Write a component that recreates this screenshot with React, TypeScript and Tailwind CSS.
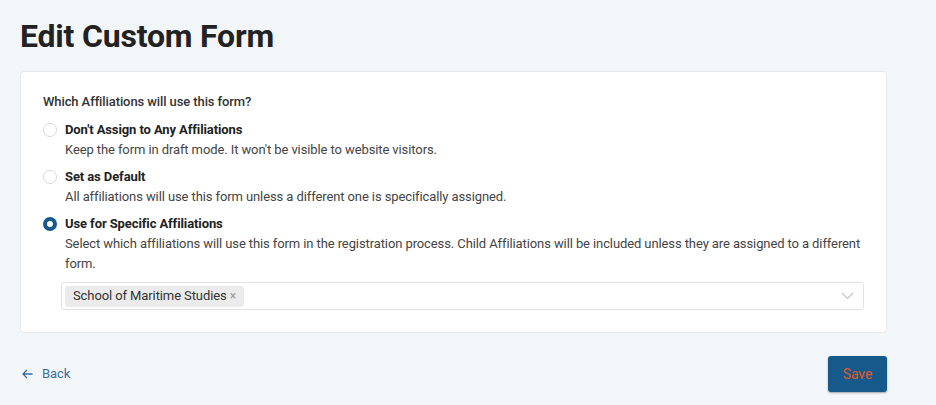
import React, { useState } from 'react';

type Option = {
    id: string;
    title: string;
    description: string;
};

const options: Option[] = [
    {
        id: 'none',
        title: "Don't Assign to Any Affiliations",
        description: "Keep the form in draft mode. It won't be visible to website visitors.",
    },
    {
        id: 'default',
        title: 'Set as Default',
        description: 'All affiliations will use this form unless a different one is specifically assigned.',
    },
    {
        id: 'specific',
        title: 'Use for Specific Affiliations',
        description:
            'Select which affiliations will use this form in the registration process. Child Affiliations will be included unless they are assigned to a different form.',
    },
];

const Radio = ({ checked }: { checked: boolean }) =>
    checked ? (
        <span className="mt-[3px] w-[14px] h-[14px] rounded-full border-[4px] border-[#155a8a] bg-white shrink-0" />
    ) : (
        <span className="mt-[3px] w-[14px] h-[14px] rounded-full border border-[#d9d9d9] bg-white shrink-0" />
    );

const App = () => {
    const [selected, setSelected] = useState<string>('specific');
    const [chips, setChips] = useState<string[]>(['School of Maritime Studies']);

    return (
        <main className="w-full min-h-[405px] bg-[#f3f6f9] px-5 pt-[14px] font-['Roboto',sans-serif] text-[#333] tracking-[-0.1px]">
            <h1 className="text-[32px] leading-[44px] font-bold text-[#222] tracking-[-0.2px]">Edit Custom Form</h1>
            <section className="mt-[13px] w-[867px] bg-white border border-[#e6e8eb] rounded-[4px] px-[22px] pt-[21px] pb-[22px]">
                <p className="text-[13px] leading-[18px] font-medium text-[#333]">Which Affiliations will use this form?</p>
                <div className="mt-[9px] flex flex-col gap-[7px]">
                    {options.map((opt) => (
                        <div key={opt.id} className="flex gap-2 cursor-pointer" onClick={() => setSelected(opt.id)}>
                            <Radio checked={selected === opt.id} />
                            <div className="flex-1">
                                <p className="text-[13px] leading-[20px] font-bold text-[#222]">{opt.title}</p>
                                <p className="text-[13px] leading-[20px] text-[#444]">{opt.description}</p>
                            </div>
                        </div>
                    ))}
                </div>
                <div className="mt-[8px] ml-[18px] h-[28px] border border-[#e2e2e2] rounded-[3px] flex items-center pl-[3px] pr-[8px]">
                    <div className="flex-1 flex items-center gap-1">
                        {chips.map((c) => (
                            <span
                                key={c}
                                className="h-[21px] px-[8px] bg-[#ebebeb] rounded-[3px] flex items-center gap-[3px] text-[13px] text-[#333]"
                            >
                                {c}
                                <button
                                    onClick={() => setChips(chips.filter((x) => x !== c))}
                                    className="text-[#999] text-[12px] leading-none"
                                >
                                    ×
                                </button>
                            </span>
                        ))}
                    </div>
                    <svg width="13" height="8" viewBox="0 0 13 8" fill="none" className="mr-[1px]">
                        <path d="M1 1l5.5 5.5L12 1" stroke="#c4c4c4" strokeWidth="1.2" />
                    </svg>
                </div>
            </section>
            <div className="w-[867px] mt-[23px] flex items-center justify-between">
                <button className="flex items-center gap-[9px] pl-[2px] text-[13px] text-[#3b6e9c]">
                    <svg width="11" height="10" viewBox="0 0 11 10" fill="none">
                        <path d="M10.5 5H1M5 1L1 5l4 4" stroke="#3b6e9c" strokeWidth="1.3" />
                    </svg>
                    Back
                </button>
                <button className="w-[59px] h-[36px] bg-[#155a8a] rounded-[3px] text-[14px] text-[#e0592e] shadow-[0_1px_2px_rgba(0,0,0,0.35)]">
                    Save
                </button>
            </div>
        </main>
    );
};

export default App;
